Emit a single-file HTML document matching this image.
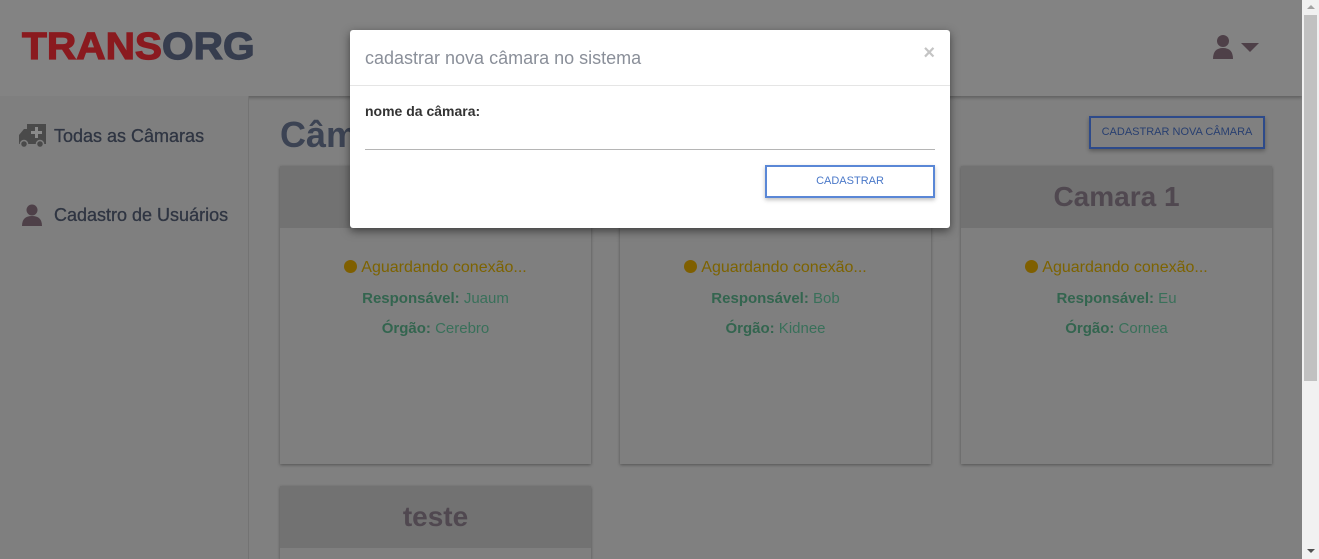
<!DOCTYPE html>
<html><head><meta charset="utf-8"><style>
*{box-sizing:border-box;margin:0;padding:0}
html,body{width:1319px;height:559px;overflow:hidden}
body{font-family:"Liberation Sans",sans-serif;background:#808080;position:relative}
.hdr{position:absolute;left:0;top:0;width:1302px;height:96px;background:#838383;box-shadow:0 2px 3px rgba(0,0,0,.25)}
.logo{position:absolute;left:22px;top:26px;font-size:38px;font-weight:900;transform:scaleX(1.07);transform-origin:left;-webkit-text-stroke:1.2px currentColor}
.side{position:absolute;left:0;top:96px;width:249px;height:463px;background:#7f7f7f;border-right:1px solid #737373}
.si{position:absolute;left:54px;font-size:18px;color:#2f3542;-webkit-text-stroke:0.3px #2f3542}
.card{position:absolute;width:311px;background:#7f7f7f;box-shadow:0 1px 3px rgba(0,0,0,.35)}
.ch{height:62px;background:#727272;text-align:center;font-size:28px;font-weight:bold;color:#504850;line-height:62px}
.st{color:#7d6300;font-size:16px;text-align:center;margin-top:31px}
.dot{display:inline-block;width:13px;height:13px;border-radius:50%;background:#7f5f00;vertical-align:-1px;margin-right:4px}
.ln{color:#39705a;font-size:15px;text-align:center;margin-top:13px}
.ln b{color:#33654f}
.sb{position:absolute;right:0;top:0;width:17px;height:559px;background:#f1f1f1}
.modal{position:absolute;left:350px;top:30px;width:600px;height:198px;background:#fff;border-radius:3px;box-shadow:0 3px 9px rgba(0,0,0,.5)}
</style></head><body>
<div class="hdr">
<div class="logo"><span style="color:#8a1a1f">TRANS</span><span style="color:#363d4e">ORG</span></div>
<svg style="position:absolute;left:1213px;top:34px" width="50" height="26" viewBox="0 0 50 26"><circle cx="10" cy="7" r="6" fill="#4e4048"/><path d="M0 25 Q0 14 10 14 Q20 14 20 25Z" fill="#4e4048"/><path d="M28 9 L46 9 L37 18Z" fill="#4e4048"/></svg>
</div>
<div class="side">
<svg style="position:absolute;left:18px;top:27px" width="29" height="26" viewBox="0 0 29 26"><rect x="9" y="1" width="19" height="17" fill="#4a4a4a"/><path d="M17 4h3v4h4v3h-4v4h-3v-4h-4V8h4z" fill="#8a8a8a"/><path d="M1 12 L6 6 L10 6 L10 21 L1 21Z" fill="#4a4a4a"/><rect x="9" y="17" width="19" height="4" fill="#4a4a4a"/><circle cx="6" cy="21" r="3.5" fill="#4a4a4a" stroke="#7f7f7f" stroke-width="1.5"/><circle cx="22" cy="21" r="3.5" fill="#4a4a4a" stroke="#7f7f7f" stroke-width="1.5"/></svg>
<div class="si" style="top:30px">Todas as Câmaras</div>
<svg style="position:absolute;left:22px;top:108px" width="20" height="22" viewBox="0 0 20 22"><circle cx="10" cy="6" r="5.5" fill="#4e4048"/><path d="M0 22 Q0 12 10 12 Q20 12 20 22Z" fill="#4e4048"/></svg>
<div class="si" style="top:109px">Cadastro de Usuários</div>
</div>
<div style="position:absolute;left:280px;top:114px;font-size:36px;font-weight:bold;color:#3c4353">Câmaras</div>
<div style="position:absolute;left:1089px;top:116px;width:176px;height:33px;border:2px solid #2d4a8a;color:#283f70;font-size:11px;text-align:center;line-height:29px;box-shadow:0 2px 4px rgba(0,0,0,.3)">CADASTRAR NOVA CÂMARA</div>
<div class="card" style="left:280px;top:166px;height:298px"><div class="ch">Camara 3</div><div class="st"><span class="dot"></span>Aguardando conexão...</div><div class="ln"><b>Responsável:</b> Juaum</div><div class="ln"><b>Órgão:</b> Cerebro</div></div>
<div class="card" style="left:620px;top:166px;height:298px"><div class="ch">Camara 2</div><div class="st"><span class="dot"></span>Aguardando conexão...</div><div class="ln"><b>Responsável:</b> Bob</div><div class="ln"><b>Órgão:</b> Kidnee</div></div>
<div class="card" style="left:961px;top:166px;height:298px"><div class="ch">Camara 1</div><div class="st"><span class="dot"></span>Aguardando conexão...</div><div class="ln"><b>Responsável:</b> Eu</div><div class="ln"><b>Órgão:</b> Cornea</div></div>
<div class="card" style="left:280px;top:486px;height:73px"><div class="ch">teste</div></div>
<div class="sb"><div style="position:absolute;left:2px;top:15px;width:13px;height:366px;background:#c1c1c1"></div>
<div style="position:absolute;left:5px;top:5px;border:4px solid transparent;border-bottom:4px solid #a3a3a3;border-top:0"></div>
<div style="position:absolute;left:5px;top:549px;border:4px solid transparent;border-top:4px solid #505050;border-bottom:0"></div></div>
<div class="modal">
<div style="position:absolute;left:15px;top:18px;font-size:18px;color:#8a8f99">cadastrar nova câmara no sistema</div>
<div style="position:absolute;right:15px;top:12px;font-size:20px;color:#c4c4c4;font-weight:bold">×</div>
<div style="position:absolute;left:0;top:55px;width:600px;height:1px;background:#e5e5e5"></div>
<div style="position:absolute;left:15px;top:73px;font-size:14px;font-weight:bold;color:#333">nome da câmara:</div>
<div style="position:absolute;left:15px;top:119px;width:570px;height:1px;background:#b5b5b5"></div>
<div style="position:absolute;left:415px;top:135px;width:170px;height:33px;border:2px solid #5a87d6;color:#4a78c8;font-size:11px;text-align:center;line-height:29px;box-shadow:0 2px 4px rgba(0,0,0,.25)">CADASTRAR</div>
</div>
</body></html>
